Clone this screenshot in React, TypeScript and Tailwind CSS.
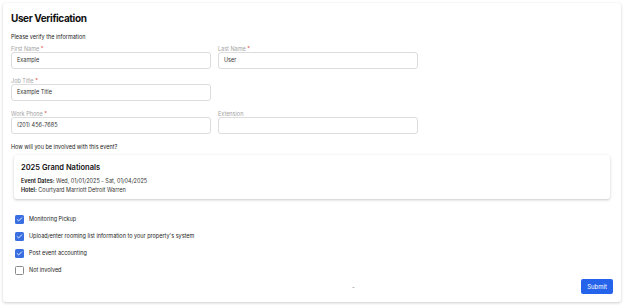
import { Check } from "lucide-react";

function Field({ label, required, value }: { label: string; required?: boolean; value?: string }) {
  return (
    <div className="w-[200px]">
      <div className="h-[10px] pt-[2px] text-[5.5px] leading-[10px] text-[#a3a3a3]">
        {label}
        {required && <span className="text-[#e0463c]"> *</span>}
      </div>
      <div className="flex h-[17px] items-center rounded-[3px] border border-[#dcdcdc] px-[5px] text-[5.5px] text-[#333]">
        {value}
      </div>
    </div>
  );
}

function Option({ label, checked }: { label: string; checked: boolean }) {
  return (
    <div className="flex h-[17px] items-center gap-[5px]">
      {checked ? (
        <span className="flex h-[9px] w-[9px] items-center justify-center rounded-[1.5px] bg-[#3a6fe2]">
          <Check className="h-[7px] w-[7px] text-white" strokeWidth={3} />
        </span>
      ) : (
        <span className="h-[9px] w-[9px] rounded-[1.5px] border border-[#8a8a8a] bg-white" />
      )}
      <span className="text-[5.5px] text-[#222]">{label}</span>
    </div>
  );
}

export default function App() {
  return (
    <div
      className="h-[306px] w-[624px] bg-white p-[3px]"
      style={{ fontFamily: "Inter, 'Noto Sans', sans-serif" }}
    >
      <div className="flex h-[299px] flex-col rounded-[3px] bg-white px-[8px] pt-[7px] shadow-[0_1px_3px_rgba(0,0,0,0.2)]">
        <h1 className="h-[16px] text-[10px] leading-[16px] font-bold tracking-[-0.04em] text-[#111]">
          User Verification
        </h1>
        <p className="mt-[6px] h-[10px] text-[5.5px] leading-[10px] text-[#222]">Please verify the information</p>

        <div className="flex gap-[7px]">
          <Field label="First Name" required value="Example" />
          <Field label="Last Name" required value="User" />
        </div>
        <div className="mt-[5px] flex gap-[7px]">
          <Field label="Job Title" required value="Example Title" />
        </div>
        <div className="mt-[6px] flex gap-[7px]">
          <Field label="Work Phone" required value="(201) 456-7685" />
          <Field label="Extension" />
        </div>

        <p className="mt-[8px] h-[10px] text-[5.5px] leading-[10px] text-[#222]">
          How will you be involved with this event?
        </p>

        <div className="mx-[3px] mt-[3px] h-[48px] rounded-[3px] bg-white px-[7px] pt-[7px] shadow-[0_1px_3px_rgba(0,0,0,0.22)]">
          <div className="h-[12px] text-[7.5px] leading-[12px] font-semibold text-[#111]">2025 Grand Nationals</div>
          <div className="mt-[3px] h-[9px] text-[5.5px] leading-[9px] text-[#333]">
            <span className="font-semibold text-[#111]">Event Dates:</span> Wed, 01/01/2025 - Sat, 01/04/2025
          </div>
          <div className="h-[9px] text-[5.5px] leading-[9px] text-[#333]">
            <span className="font-semibold text-[#111]">Hotel:</span> Courtyard Marriott Detroit Warren
          </div>
        </div>

        <div className="mt-[12px] flex flex-col pl-[4px]">
          <Option checked label="Monitoring Pickup" />
          <Option checked label="Upload/enter rooming list information to your property's system" />
          <Option checked label="Post event accounting" />
          <Option checked={false} label="Not involved" />
        </div>

        <div className="mt-auto mb-[8px] flex items-center justify-between">
          <span className="ml-[341px] text-[6px] text-[#777]">-</span>
          <button className="h-[15px] w-[32px] rounded-[2px] bg-[#2563eb] text-[6px] text-white">Submit</button>
        </div>
      </div>
    </div>
  );
}
